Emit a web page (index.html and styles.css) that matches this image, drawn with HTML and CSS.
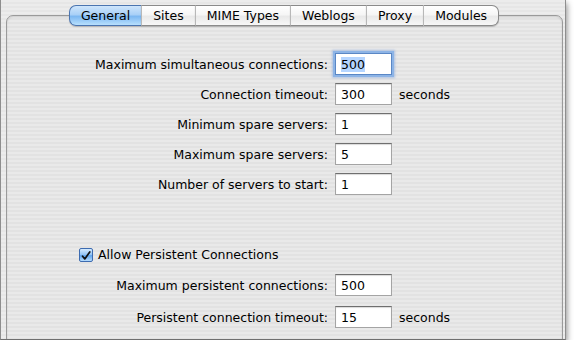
FILE: index.html
```html
<!DOCTYPE html>
<html lang="en">
<head>
  <meta charset="UTF-8">
  <title>Server Settings</title>
  <link rel="stylesheet" href="styles.css">
</head>
<body>
  <div class="window">
    <div class="tabs">
      <div class="tab tab-first tab-selected">General</div>
      <div class="tab">Sites</div>
      <div class="tab">MIME Types</div>
      <div class="tab">Weblogs</div>
      <div class="tab">Proxy</div>
      <div class="tab tab-last">Modules</div>
    </div>
    <div class="tab-box">
      <div class="form-grid">
        <label class="field-label" for="maxConn">Maximum simultaneous connections:</label>
        <div class="field-input focused"><span class="selected-text">500</span></div>
        <span></span>

        <label class="field-label">Connection timeout:</label>
        <div class="field-input">300</div>
        <span class="unit">seconds</span>

        <label class="field-label">Minimum spare servers:</label>
        <div class="field-input">1</div>
        <span></span>

        <label class="field-label">Maximum spare servers:</label>
        <div class="field-input">5</div>
        <span></span>

        <label class="field-label">Number of servers to start:</label>
        <div class="field-input">1</div>
        <span></span>
      </div>

      <div class="check-row">
        <span class="checkbox">
          <svg width="14" height="14" viewBox="0 0 14 14">
            <path d="M3 7.2 L5.6 10.4 L11.4 2.2" fill="none" stroke="#111" stroke-width="2" stroke-linecap="round" stroke-linejoin="round"/>
          </svg>
        </span>
        <span>Allow Persistent Connections</span>
      </div>

      <div class="form-grid form-grid-lower">
        <label class="field-label">Maximum persistent connections:</label>
        <div class="field-input">500</div>
        <span></span>

        <label class="field-label">Persistent connection timeout:</label>
        <div class="field-input">15</div>
        <span class="unit">seconds</span>
      </div>
    </div>
  </div>
</body>
</html>
```

FILE: styles.css
```css
body {
  margin: 0;
  background: #fff;
  font-family: "DejaVu Sans", "Liberation Sans", sans-serif;
  font-size: 12.5px;
  color: #000;
}
.window {
  width: 566px;
  height: 340px;
  box-sizing: border-box;
  border-left: 1px solid #8e8e8e;
  border-right: 1px solid #8e8e8e;
  border-bottom: 1px solid #6f6f6f;
  background: repeating-linear-gradient(#ececec 0, #ececec 2px, #e6e6e6 2px, #e6e6e6 4px);
  box-shadow: 1px 3px 6px rgba(0,0,0,0.45);
  overflow: hidden;
}
.tabs {
  display: flex;
  justify-content: center;
  margin: 5px 2px -11px 4px;
  position: relative;
  z-index: 1;
}
.tab {
  height: 21px;
  line-height: 20px;
  padding: 0 11px;
  box-sizing: border-box;
  background: linear-gradient(#ffffff 0%, #f6f6f6 45%, #e9e9e9 55%, #f7f7f7 100%);
  border: 1px solid #8a8a8a;
  border-left: 1px solid #b8b8b8;
  border-right: none;
  box-shadow: 0 1px 1px rgba(0,0,0,0.2);
}
.tab-first { border-left: 1px solid #4b75b0; border-radius: 7px 0 0 7px; }
.tab-last { border-right: 1px solid #8a8a8a; border-radius: 0 7px 7px 0; }
.tab-selected {
  background: linear-gradient(#cfe6fc 0%, #a9d0f7 45%, #7db8f2 55%, #b8e0fd 100%);
  border-color: #4b75b0;
}
.tab-box {
  margin: 0 2px 0 5px;
  height: 340px;
  border: 1px solid #9a9a9a;
  border-radius: 7px 7px 0 0;
  background: repeating-linear-gradient(#e9e9e9 0, #e9e9e9 2px, #e2e2e2 2px, #e2e2e2 4px);
  box-shadow: inset 0 1px 2px rgba(0,0,0,0.12);
  padding-top: 37px;
}
.form-grid {
  display: grid;
  grid-template-columns: 321px 57px auto;
  column-gap: 7px;
  row-gap: 8px;
  align-items: center;
}
.field-label { text-align: right; }
.field-input {
  height: 22px;
  line-height: 21px;
  box-sizing: border-box;
  padding-left: 5px;
  background: #fff;
  border: 1px solid #a4a4a4;
  border-top-color: #6f6f6f;
  box-shadow: inset 0 1px 1px rgba(0,0,0,0.15);
}
.focused { box-shadow: 0 0 0 2px #8db4e6, 0 0 2px 3px rgba(120,160,220,0.5); border-color: #5a87c5; }
.selected-text { background: #b5d5ff; }
.unit { padding-left: 0; }
.check-row {
  display: flex;
  align-items: center;
  gap: 5px;
  margin: 52px 0 12px 72px;
}
.checkbox {
  width: 14px;
  height: 14px;
  box-sizing: border-box;
  border: 1px solid #3d6bb0;
  border-radius: 2px;
  background: linear-gradient(#d5ebff 0%, #8fc2f4 50%, #5fa5ee 55%, #b6dcfd 100%);
  display: flex;
}
.form-grid-lower { row-gap: 10px; }
```
